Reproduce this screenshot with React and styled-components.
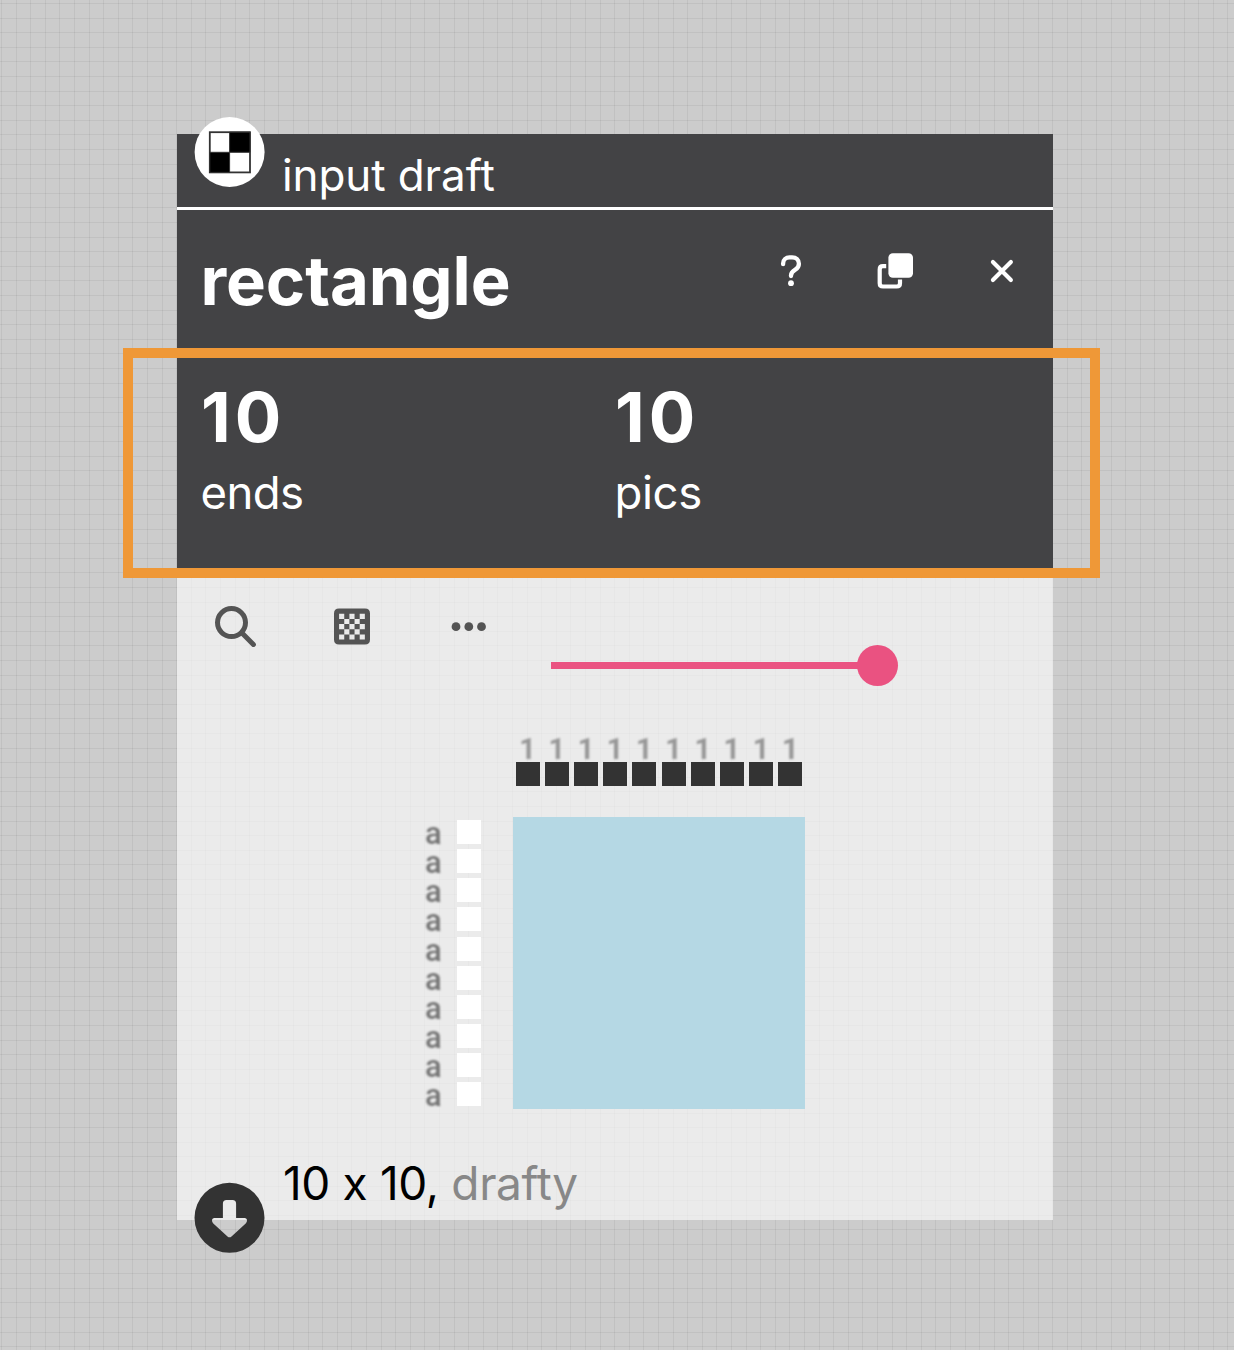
import React from 'react';
import styled, { createGlobalStyle } from 'styled-components';

const GlobalStyle = createGlobalStyle`
  * { box-sizing: border-box; }
  body { margin: 0; background: #ccc; }
  svg { display: block; overflow: visible; }
`;

const Workspace = styled.main`
  width: 1234px;
  height: 1350px;
  padding: 134px 181px 0 177px;
  overflow: hidden;
  font-family: Inter, 'Liberation Sans', sans-serif;
  font-feature-settings: 'calt' 0;
  background-color: #ccc;
  background-image:
    repeating-linear-gradient(to right, rgba(0, 0, 0, 0.055) 0 1px, transparent 1px 14.6px),
    repeating-linear-gradient(to bottom, rgba(0, 0, 0, 0.055) 0 1px, transparent 1px 14.6px);
  background-position: 1px 0, 0 3px;
`;

const Card = styled.section`
  position: relative;
  width: 876px;
  height: 1086px;
  display: flex;
  flex-direction: column;
`;

const TypeBar = styled.header`
  height: 76px;
  padding: 11px 0 0 105px;
  border-bottom: 3px solid #fff;
  background: #434345;
  color: #fff;
  font-size: 44px;
  line-height: 60px;
  letter-spacing: ${(p) => p.$tracking};
`;

const Info = styled.div`
  height: 363px;
  background: #434345;
  color: #fff;
`;

const TitleRow = styled.div`
  display: flex;
  justify-content: space-between;
  height: 148px;
  padding: 31px 31px 0 23.5px;
`;

const Title = styled.h1`
  margin: 0;
  font-size: 67px;
  font-weight: 700;
  line-height: 80px;
  letter-spacing: ${(p) => p.$tracking};
`;

const Actions = styled.div`
  display: flex;
  align-items: center;
  height: 60px;
  gap: 57px;
`;

const IconButton = styled.button`
  display: grid;
  place-items: center;
  width: ${(p) => p.$size}px;
  height: ${(p) => p.$size}px;
  padding: 0;
  border: 0;
  background: none;
  color: inherit;
`;

const Params = styled.div`
  display: grid;
  grid-template-columns: 414px 1fr;
  padding: 19px 0 0 24px;
`;

const Value = styled.div`
  font-size: 69px;
  font-weight: 700;
  line-height: 80px;
  letter-spacing: ${(p) => p.$tracking};
`;

const Label = styled.div`
  font-size: 45.5px;
  line-height: 60px;
  margin-top: 6px;
  margin-left: -0.5px;
  letter-spacing: ${(p) => p.$tracking};
`;

const Body = styled.div`
  flex: 1;
  display: flex;
  flex-direction: column;
  background: rgba(255, 255, 255, 0.61);
`;

const Toolbar = styled.div`
  display: flex;
  height: 164.6px;
  padding: 35px 0 0 34px;
  color: #545454;
`;

const Tools = styled.div`
  display: flex;
  gap: 69px;
`;

const Slider = styled.div`
  display: flex;
  align-items: center;
  width: 347.5px;
  height: 41px;
  margin: 37px 0 0 57.6px;
`;

const Track = styled.div`
  flex: 1;
  height: 6.4px;
  margin-right: -2px;
  background: #ea5281;
`;

const Thumb = styled.div`
  width: 41px;
  height: 41px;
  border-radius: 50%;
  background: #ea5281;
`;

const Draft = styled.div`
  display: grid;
  grid-template-columns: 56px 292px;
  grid-template-rows: 79.6px 292px;
  column-gap: 32px;
  margin-left: 248px;
`;

const Threading = styled.div`
  grid-column: 2;
  display: flex;
  gap: 5.2px;
  padding: 0 2.6px;
`;

const End = styled.div`
  display: flex;
  flex-direction: column;
  align-items: center;
  width: 24px;
`;

const Digit = styled.span`
  height: 24px;
  font: 700 29px/22px Roboto, Arial, sans-serif;
  color: #969696;
  filter: blur(0.8px);
`;

const Swatch = styled.span`
  width: 24px;
  height: 24px;
  background: ${(p) => p.$color};
`;

const Treadling = styled.div`
  display: flex;
  flex-direction: column;
  gap: 5.2px;
  padding-top: 2.6px;
`;

const Pick = styled.div`
  display: flex;
  justify-content: space-between;
  height: 24px;
`;

const Letter = styled.span`
  margin-top: 2px;
  font: 500 31px/24px Roboto, Arial, sans-serif;
  color: #757575;
  filter: blur(0.8px);
`;

const Drawdown = styled.div`
  background: #b5d8e4;
`;

const Caption = styled.footer`
  margin-top: 44px;
  padding-left: 106px;
  font-size: 46px;
  line-height: 60px;
  color: #000;
  letter-spacing: ${(p) => p.$tracking};
`;

const Muted = styled.span`
  color: #888;
`;

const Badge = styled.div`
  position: absolute;
  left: 17.5px;
  ${(p) => (p.$bottom ? 'bottom: -33px;' : 'top: -17.5px;')}
`;

const Highlight = styled.div`
  position: absolute;
  left: -54px;
  top: 214px;
  width: 977px;
  height: 230px;
  border: 10px solid #ef9837;
`;

const HelpIcon = () => (
  <svg width="48" height="48" viewBox="-3 0 48 48" fill="none" stroke="currentColor" strokeWidth="4.3" strokeLinecap="round" strokeLinejoin="round">
    <path d="M16.1 17.2V16.4C16.1 12.9 19 10.3 22.5 10.3H25.2C29 10.3 31.9 13.1 31.9 16.7C31.9 19.3 30.6 21.3 28.3 22.7C25.7 24.3 24 25.6 24 28.5V29" />
    <circle cx="24" cy="36.2" r="2.9" fill="currentColor" stroke="none" />
  </svg>
);

const CloneIcon = () => (
  <svg width="48" height="48" viewBox="2.3 -0.2 48 48" fill="none">
    <path d="M19.5 19H16.3Q13 19 13 22.3V36Q13 39.3 16.3 39.3H30Q33.3 39.3 33.3 36V32.4" stroke="currentColor" strokeWidth="4.2" />
    <rect x="21.7" y="6" width="24.6" height="24.6" rx="4.5" fill="currentColor" />
  </svg>
);

const CloseIcon = () => (
  <svg width="48" height="48" fill="none" stroke="currentColor" strokeWidth="4.1" strokeLinecap="round">
    <path d="M18.9 15L36.9 33M36.9 15L18.9 33" />
  </svg>
);

const SearchIcon = () => (
  <svg width="48" height="48" fill="none" stroke="currentColor" strokeWidth="5" strokeLinecap="round">
    <circle cx="20.5" cy="14.6" r="14" />
    <path d="M31 25L42.4 36.4" />
  </svg>
);

const checks = [];
for (let r = 0; r < 5; r += 1) {
  for (let c = 0; c < 5; c += 1) {
    if ((r + c) % 2 === 0) checks.push(`M${11.1 + c * 5.15} ${5.8 + r * 5.15}h5.15v5.15h-5.15z`);
  }
}

const WeaveIcon = () => (
  <svg width="48" height="48">
    <path
      fill="currentColor"
      fillRule="evenodd"
      d={`M11 .5H37Q42 .5 42 5.5V31.5Q42 36.5 37 36.5H11Q6 36.5 6 31.5V5.5Q6 .5 11 .5Z${checks.join('')}`}
    />
  </svg>
);

const MoreIcon = () => (
  <svg width="48" height="48" fill="currentColor">
    <circle cx="11" cy="18.7" r="4.4" />
    <circle cx="23.8" cy="18.7" r="4.4" />
    <circle cx="36.5" cy="18.7" r="4.4" />
  </svg>
);

const DraftBadge = () => (
  <svg width="70" height="70" viewBox="0.4 0 70 70">
    <circle cx="35" cy="35" r="35" fill="#fff" />
    <rect x="15.2" y="15.2" width="40.2" height="40.2" fill="#fff" stroke="#333" strokeWidth="1.8" />
    <path d="M35 15.2H55.4V35.3H35ZM15.2 35.3H35V55.4H15.2Z" fill="#000" stroke="#333" strokeWidth="1" />
  </svg>
);

const ArrowBadge = () => (
  <svg width="70" height="70" viewBox="0.5 0.2 70 70">
    <path
      fill="#333"
      fillRule="evenodd"
      d="M35 0A35 35 0 1 1 35 70A35 35 0 1 1 35 0ZM32 17.3Q28.4 17.3 28.4 21V35.3H20Q17.5 35.3 17.5 38Q17.5 39.3 18.8 40.6L33 53.6Q35 55.4 37 53.6L51.2 40.6Q52.5 39.3 52.5 38Q52.5 35.3 50 35.3H41.6V21Q41.6 17.3 38 17.3Z"
    />
  </svg>
);

const threads = Array.from({ length: 10 }, (_, i) => i);

export default function App() {
  return (
    <>
      <GlobalStyle />
      <Workspace>
        <Card>
          <TypeBar $tracking="-0.1px">input draft</TypeBar>
          <Info>
            <TitleRow>
              <Title $tracking="-0.1px">rectangle</Title>
              <Actions>
                <IconButton $size={48} aria-label="Help"><HelpIcon /></IconButton>
                <IconButton $size={48} aria-label="Duplicate"><CloneIcon /></IconButton>
                <IconButton $size={48} aria-label="Close"><CloseIcon /></IconButton>
              </Actions>
            </TitleRow>
            <Params>
              <div>
                <Value $tracking="4px">10</Value>
                <Label $tracking="-0.6px">ends</Label>
              </div>
              <div>
                <Value $tracking="4px">10</Value>
                <Label $tracking="-0.4px">pics</Label>
              </div>
            </Params>
          </Info>
          <Body>
            <Toolbar>
              <Tools>
                <IconButton $size={48} aria-label="Zoom"><SearchIcon /></IconButton>
                <IconButton $size={48} aria-label="View"><WeaveIcon /></IconButton>
                <IconButton $size={48} aria-label="More"><MoreIcon /></IconButton>
              </Tools>
              <Slider>
                <Track />
                <Thumb />
              </Slider>
            </Toolbar>
            <Draft>
              <Threading>
                {threads.map((i) => (
                  <End key={i}>
                    <Digit>1</Digit>
                    <Swatch $color="#333" />
                  </End>
                ))}
              </Threading>
              <Treadling>
                {threads.map((i) => (
                  <Pick key={i}>
                    <Letter>a</Letter>
                    <Swatch $color="#fff" />
                  </Pick>
                ))}
              </Treadling>
              <Drawdown />
            </Draft>
            <Caption $tracking="-0.35px">
              10 x 10, <Muted>drafty</Muted>
            </Caption>
          </Body>
          <Badge><DraftBadge /></Badge>
          <Badge $bottom><ArrowBadge /></Badge>
          <Highlight />
        </Card>
      </Workspace>
    </>
  );
}
